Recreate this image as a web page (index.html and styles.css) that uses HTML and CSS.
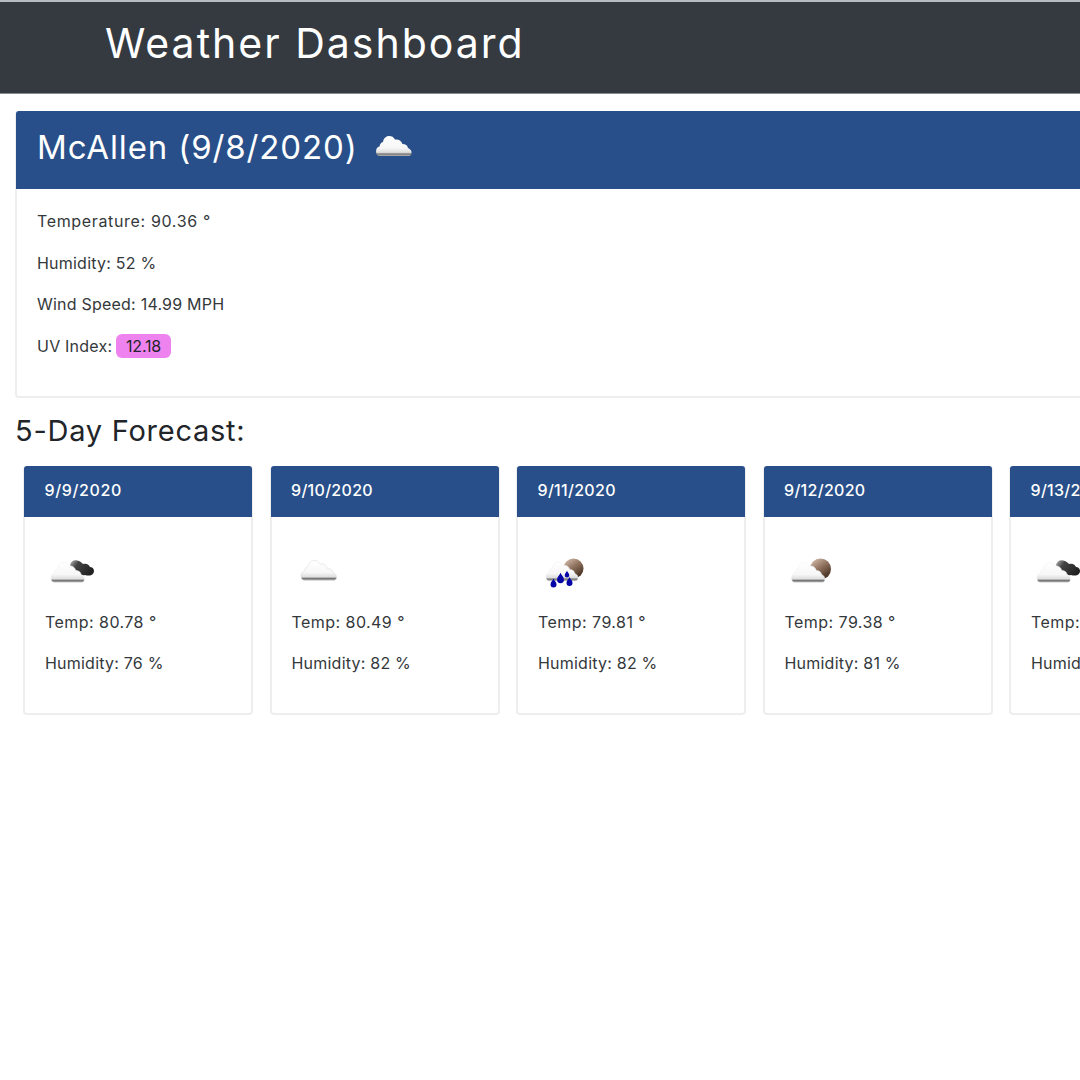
FILE: index.html
```html
<!DOCTYPE html>
<html lang="en">
<head>
<meta charset="utf-8">
<title>Weather Dashboard</title>
<link rel="stylesheet" href="styles.css">
</head>
<body>
<svg class="defs" aria-hidden="true">
  <defs>
    <linearGradient id="white" x1="0" y1="0" x2="0" y2="1"><stop offset="0" stop-color="#fff"/><stop offset=".6" stop-color="#f7f7f7"/><stop offset=".82" stop-color="#dedede"/><stop offset=".9" stop-color="#777"/><stop offset="1" stop-color="#b5b5b5"/></linearGradient>
    <linearGradient id="dark" x1="0" y1="0" x2="1" y2=".5"><stop offset="0" stop-color="#bbb"/><stop offset=".35" stop-color="#444"/><stop offset="1" stop-color="#222"/></linearGradient>
    <linearGradient id="moon" x1="0" y1="0" x2=".7" y2="1"><stop offset="0" stop-color="#dfc9b9"/><stop offset=".5" stop-color="#927561"/><stop offset="1" stop-color="#432b1c"/></linearGradient>
    <path id="cloud" d="M4 20C1 20 0 18 0 15.500C0 12.500 1.500 11 3.500 10.500C4 8 5 6.500 7 6C7.500 2.500 10 0 13 0C16 0 17.500 1 19 3.500C23 3 25.500 5 26.500 8C29.500 8 31.500 9.500 32 12C34.500 13 36 15 35.500 17.500C35 19.500 34 20 32 20Z"/>
    <path id="drop" d="M0-4.500C1 -2 3-1 3 1.500A3 3 0 0 1-3 1.500C-3-1-1-2 0-4.500Z" fill="#0505a8"/>
    <g id="broken">
      <path d="M25 20C26 15.500 30 14 34 16C36 17 37 18 38 19C42 18 44 20 45 22C48 22 50 25 48.500 28C47 31 43 31 40 30C36 31 34 28 32 26C29 26 27 24 25 20Z" fill="url(#dark)"/>
      <use href="#cloud" transform="translate(6 17.500) scale(.94 1)" fill="url(#white)" stroke="#eee" stroke-width=".5"/>
    </g>
  </defs>
</svg>
<header class="topbar"><h1 class="brand">Weather Dashboard</h1></header>
<main class="content">
  <section class="card today">
    <h2 class="card-head today-head"><span>McAllen (9/8/2020)</span>
      <svg class="today-icon" viewBox="0 0 36 20"><use href="#cloud" fill="url(#white)"/></svg></h2>
    <div class="card-body">
      <p class="wide">Temperature: 90.36 °</p>
      <p>Humidity: 52 %</p>
      <p>Wind Speed: 14.99 MPH</p>
      <p>UV Index: <span class="uv">12.18</span></p>
    </div>
  </section>
  <h3 class="forecast-title">5-Day Forecast:</h3>
  <section class="forecast">
    <article class="card day">
      <h5 class="card-head day-head wide">9/9/2020</h5>
      <div class="card-body"><svg class="icon" viewBox="0 0 52 52"><use href="#broken"/></svg>
        <p class="temp">Temp: 80.78 °</p><p>Humidity: 76 %</p></div>
    </article>
    <article class="card day">
      <h5 class="card-head day-head">9/10/2020</h5>
      <div class="card-body"><svg class="icon" viewBox="0 0 52 52"><use href="#cloud" transform="translate(9 15.500)" fill="url(#white)" stroke="#ddd" stroke-width=".6"/></svg>
        <p class="temp">Temp: 80.49 °</p><p>Humidity: 82 %</p></div>
    </article>
    <article class="card day">
      <h5 class="card-head day-head">9/11/2020</h5>
      <div class="card-body"><svg class="icon" viewBox="0 0 52 52"><circle cx="35.500" cy="23.500" r="10" fill="url(#moon)"/><use href="#cloud" transform="translate(8 17) scale(.9 .95)" fill="url(#white)" stroke="#eee" stroke-width=".5"/>
        <use href="#drop" x="15.500" y="38"/><use href="#drop" transform="translate(22.500 33) scale(1.15)"/><use href="#drop" transform="translate(29 29) scale(.75)"/><use href="#drop" x="31.500" y="36.500"/></svg>
        <p class="temp">Temp: 79.81 °</p><p>Humidity: 82 %</p></div>
    </article>
    <article class="card day">
      <h5 class="card-head day-head">9/12/2020</h5>
      <div class="card-body"><svg class="icon" viewBox="0 0 52 52"><circle cx="35.500" cy="24" r="10.500" fill="url(#moon)"/><use href="#cloud" transform="translate(6.500 17.500) scale(.94 1)" fill="url(#white)" stroke="#eee" stroke-width=".5"/></svg>
        <p class="temp">Temp: 79.38 °</p><p>Humidity: 81 %</p></div>
    </article>
    <article class="card day">
      <h5 class="card-head day-head">9/13/2020</h5>
      <div class="card-body"><svg class="icon" viewBox="0 0 52 52"><use href="#broken"/></svg>
        <p class="temp">Temp: 79.2 °</p><p>Humidity: 80 %</p></div>
    </article>
  </section>
</main>
</body>
</html>
```
FILE: styles.css
```css
* { box-sizing: border-box; }
body { margin: 0; background: #fff; color: #212529; font-family: Inter, "Open Sans", sans-serif; font-size: 16px; line-height: 25px; overflow: hidden; }
h1, h2, h3, h5, p { margin: 0; font-weight: 400; }
.defs { display: block; width: 0; height: 0; }
.topbar { height: 94px; padding: 16px 105px 0; background: #343a40; border-top: 2px solid #b5bcc1; border-bottom: 1px solid #858a8e; color: #fff; }
.brand { font-size: 41px; line-height: 50px; letter-spacing: 2px; white-space: nowrap; }
.content { padding: 17px 0 0 15px; }
.card { border: 2px solid #eee; border-radius: 4px; background: #fff; }
.card-head { background: #284f89; color: #fff; white-space: nowrap; border-radius: 3px 3px 0 0; }
.today { width: 1250px; height: 287px; }
.today-head { display: flex; gap: 18px; height: 78px; margin: -2px -2px 0 -1px; padding: 16px 21px; font-size: 33px; line-height: 40px; letter-spacing: .87px; }
.today-icon { width: 36px; height: 20px; margin-top: 9px; }
.card-body { padding: 20px 20px 0; color: #34383b; letter-spacing: .22px; }
.card-body p { margin-bottom: 16.500px; white-space: nowrap; }
.card-body .wide, .day-head.wide { letter-spacing: .65px; }
.card-body .temp { letter-spacing: .45px; }
.uv { display: inline-block; height: 24px; margin-left: -1px; padding: 0 10px; border-radius: 6px; background: #ee82ee; color: #212529; line-height: 24px; letter-spacing: -.2px; }
.forecast-title { height: 40px; margin-top: 13px; font-size: 29px; line-height: 40px; letter-spacing: .75px; }
.forecast { display: flex; gap: 16.500px; padding: 15px 0 0 8px; }
.day { flex: 0 0 230px; height: 249px; }
.day-head { height: 51px; margin: -2px -1px 0; padding: 11px 20.500px; font-size: 16px; font-weight: 500; line-height: 26px; letter-spacing: .3px; }
.icon { display: block; width: 52px; height: 52px; margin: 8px 0 12.500px; }
```
